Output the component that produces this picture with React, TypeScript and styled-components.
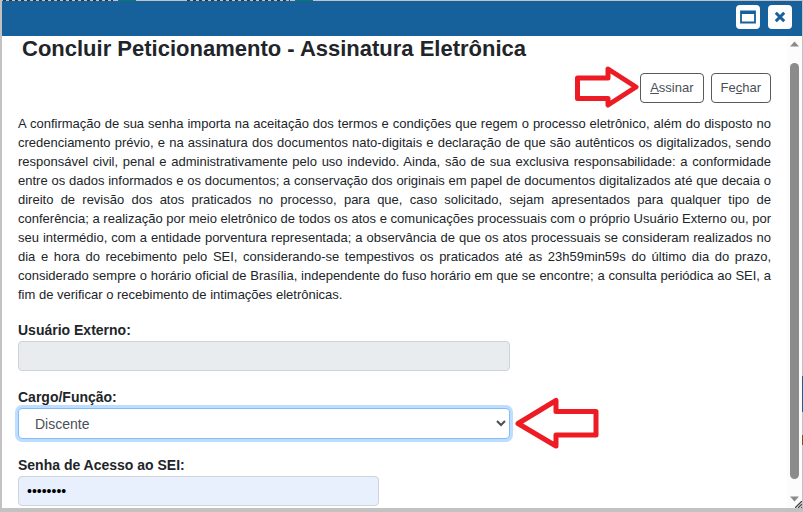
import React from "react";
import styled, { createGlobalStyle } from "styled-components";

const GlobalStyle = createGlobalStyle`
  *, *::before, *::after { box-sizing: border-box; }
  body {
    margin: 0;
    background: #c2c2c2;
    color: #212529;
    font-family: "Liberation Sans", Arial, sans-serif;
  }
`;

const Backdrop = styled.div`
  display: flex;
  min-height: 100vh;
  padding: 1px 1px 4px 2px;
  background:
    linear-gradient(#16609b, #16609b) right 0 top 376px / 1px 36px no-repeat,
    linear-gradient(#8a4a2a, #8a4a2a) right 0 top 435px / 1px 10px no-repeat,
    linear-gradient(#0f766e, #0f766e) 118px 0 / 18px 1px no-repeat,
    linear-gradient(#0f766e, #0f766e) 295px 0 / 18px 1px no-repeat,
    repeating-linear-gradient(90deg, #333 0 3px, #c2c2c2 3px 6px) 3px 0 / 110px 1px no-repeat,
    repeating-linear-gradient(90deg, #333 0 3px, #c2c2c2 3px 6px) 187px 0 / 103px 1px no-repeat,
    #c2c2c2;
`;

const Dialog = styled.section`
  display: flex;
  flex: 1;
  flex-direction: column;
  min-width: 0;
  background: #fff;
`;

const TitleBar = styled.header`
  display: flex;
  align-items: center;
  justify-content: flex-end;
  gap: 8px;
  height: 35px;
  padding: 0 10px 3px;
  background: #16609b;
`;

const WindowButton = styled.button`
  display: grid;
  place-items: center;
  width: 24px;
  height: 24px;
  padding: 0;
  border: 0;
  border-radius: 4px;
  background: #fff;
  color: #16609b;
`;

const Viewport = styled.div`
  display: flex;
  flex: 1;
`;

const Content = styled.main`
  flex: 1;
  min-width: 0;
  padding: 0 16px 1px;
`;

const Title = styled.h1`
  margin: 0 0 4px;
  padding-left: 4px;
  font-size: 22px;
  line-height: 26px;
`;

const Toolbar = styled.div`
  display: flex;
  align-items: center;
  justify-content: flex-end;
  gap: 7px;
  height: 43px;
`;

const Marked = styled.div`
  display: flex;
  align-items: center;
`;

const ActionButton = styled.button`
  height: 30px;
  padding: 0 9px;
  border: 1px solid #5a5a5a;
  border-radius: 4px;
  background: #fff;
  color: #495057;
  font: 13px "Liberation Sans", Arial, sans-serif;
`;

const Terms = styled.p`
  margin: 5px 0 16px;
  font-size: 13px;
  line-height: 19px;
  text-align: justify;
`;

const Form = styled.form`
  display: flex;
  flex-direction: column;
  gap: 16px;
`;

const Field = styled.div<{ $width: string }>`
  position: relative;
  display: flex;
  flex-direction: column;
  gap: 1px;
  width: ${(p) => p.$width};
`;

const Label = styled.label`
  font-size: 14px;
  font-weight: 700;
  line-height: 20px;
`;

const Input = styled.input`
  width: 100%;
  height: 30px;
  padding: 0 8px;
  border: 1px solid #ced4da;
  border-radius: 4px;
  background: #e8f0fe;
  color: #000;
  font: 14px "Liberation Sans", Arial, sans-serif;

  &:disabled {
    background: #e9ecef;
  }
`;

const Select = styled.select`
  width: 100%;
  height: 31px;
  padding: 0 0 0 12px;
  border: 1px solid #80bdff;
  border-radius: 4px;
  outline: 0;
  background: #fff;
  box-shadow: 0 0 0 3px #bfdeff;
  color: #495057;
  font: 14px "Liberation Sans", Arial, sans-serif;
`;

const SidePointer = styled.svg`
  position: absolute;
  top: 10px;
  left: calc(100% + 4px);
`;

const Scrollbar = styled.div`
  position: relative;
  display: flex;
  flex-direction: column;
  align-items: center;
  width: 15px;
  padding: 5px 0 6px;
  background: #fcfcfc;
`;

const Thumb = styled.div`
  flex: 1;
  width: 9px;
  margin: 16px 0 17px;
  border-radius: 5px;
  background: #8b8b8b;
`;

const ResizeGrip = styled.svg`
  position: absolute;
  right: 0;
  bottom: 0;
`;

export default function App() {
  return (
    <Backdrop>
      <GlobalStyle />
      <Dialog aria-labelledby="titulo">
        <TitleBar>
          <WindowButton type="button" aria-label="Maximizar">
            <svg width="16" height="14" viewBox="0 0 16 14">
              <path d="M1 1.5h14v11H1z" fill="none" stroke="currentColor" strokeWidth="1.8" />
              <path d="M1 1h14v3H1z" fill="currentColor" />
            </svg>
          </WindowButton>
          <WindowButton type="button" aria-label="Fechar janela">
            <svg width="12" height="12" viewBox="0 0 12 12">
              <path d="M1.8 1.8l8.4 8.4M10.2 1.8l-8.4 8.4" stroke="currentColor" strokeWidth="3" />
            </svg>
          </WindowButton>
        </TitleBar>
        <Viewport>
          <Content>
            <Title id="titulo">Concluir Peticionamento - Assinatura Eletrônica</Title>
            <Toolbar>
              <Marked>
                <svg width="65" height="43" viewBox="0 0 65 43" aria-hidden="true">
                  <path
                    d="M2.5 12H33V3L61 21L33 39V32.5H2.5Z"
                    fill="#fff"
                    stroke="#ed1c24"
                    strokeWidth="5"
                    strokeLinejoin="round"
                  />
                </svg>
                <ActionButton type="button"><u>A</u>ssinar</ActionButton>
              </Marked>
              <ActionButton type="button">Fe<u>c</u>har</ActionButton>
            </Toolbar>
            <Terms>
              A confirmação de sua senha importa na aceitação dos termos e condições que regem o
              processo eletrônico, além do disposto no credenciamento prévio, e na assinatura dos
              documentos nato-digitais e declaração de que são autênticos os digitalizados, sendo
              responsável civil, penal e administrativamente pelo uso indevido. Ainda, são de sua
              exclusiva responsabilidade: a conformidade entre os dados informados e os documentos;
              a conservação dos originais em papel de documentos digitalizados até que decaia o
              direito de revisão dos atos praticados no processo, para que, caso solicitado, sejam
              apresentados para qualquer tipo de conferência; a realização por meio eletrônico de
              todos os atos e comunicações processuais com o próprio Usuário Externo ou, por seu
              intermédio, com a entidade porventura representada; a observância de que os atos
              processuais se consideram realizados no dia e hora do recebimento pelo SEI,
              considerando-se tempestivos os praticados até as 23h59min59s do último dia do prazo,
              considerado sempre o horário oficial de Brasília, independente do fuso horário em que
              se encontre; a consulta periódica ao SEI, a fim de verificar o recebimento de
              intimações eletrônicas.
            </Terms>
            <Form>
              <Field $width="65.3%">
                <Label htmlFor="usuario">Usuário Externo:</Label>
                <Input id="usuario" type="text" disabled />
              </Field>
              <Field $width="65.3%">
                <Label htmlFor="cargo">Cargo/Função:</Label>
                <Select id="cargo" defaultValue="discente">
                  <option value="discente">Discente</option>
                </Select>
                <SidePointer width="85" height="53" viewBox="0 0 85 53" aria-hidden="true">
                  <path
                    d="M4 26.5L42 3.5V14.5H82V38H42V49Z"
                    fill="#fff"
                    stroke="#ed1c24"
                    strokeWidth="5"
                    strokeLinejoin="round"
                  />
                </SidePointer>
              </Field>
              <Field $width="48%">
                <Label htmlFor="senha">Senha de Acesso ao SEI:</Label>
                <Input id="senha" type="password" defaultValue="abcdefgh" autoComplete="off" />
              </Field>
            </Form>
          </Content>
          <Scrollbar aria-hidden="true">
            <svg width="9" height="6" viewBox="0 0 9 6">
              <path d="M0 5.5L4.5 0.5L9 5.5Z" fill="#8b8b8b" />
            </svg>
            <Thumb />
            <svg width="9" height="6" viewBox="0 0 9 6">
              <path d="M0 0.5L4.5 5.5L9 0.5Z" fill="#8b8b8b" />
            </svg>
            <ResizeGrip width="7" height="7" viewBox="0 0 7 7">
              <path d="M0 7L7 0M3 7L7 3M6 7L7 6" stroke="#444" strokeWidth="1.3" />
            </ResizeGrip>
          </Scrollbar>
        </Viewport>
      </Dialog>
    </Backdrop>
  );
}
